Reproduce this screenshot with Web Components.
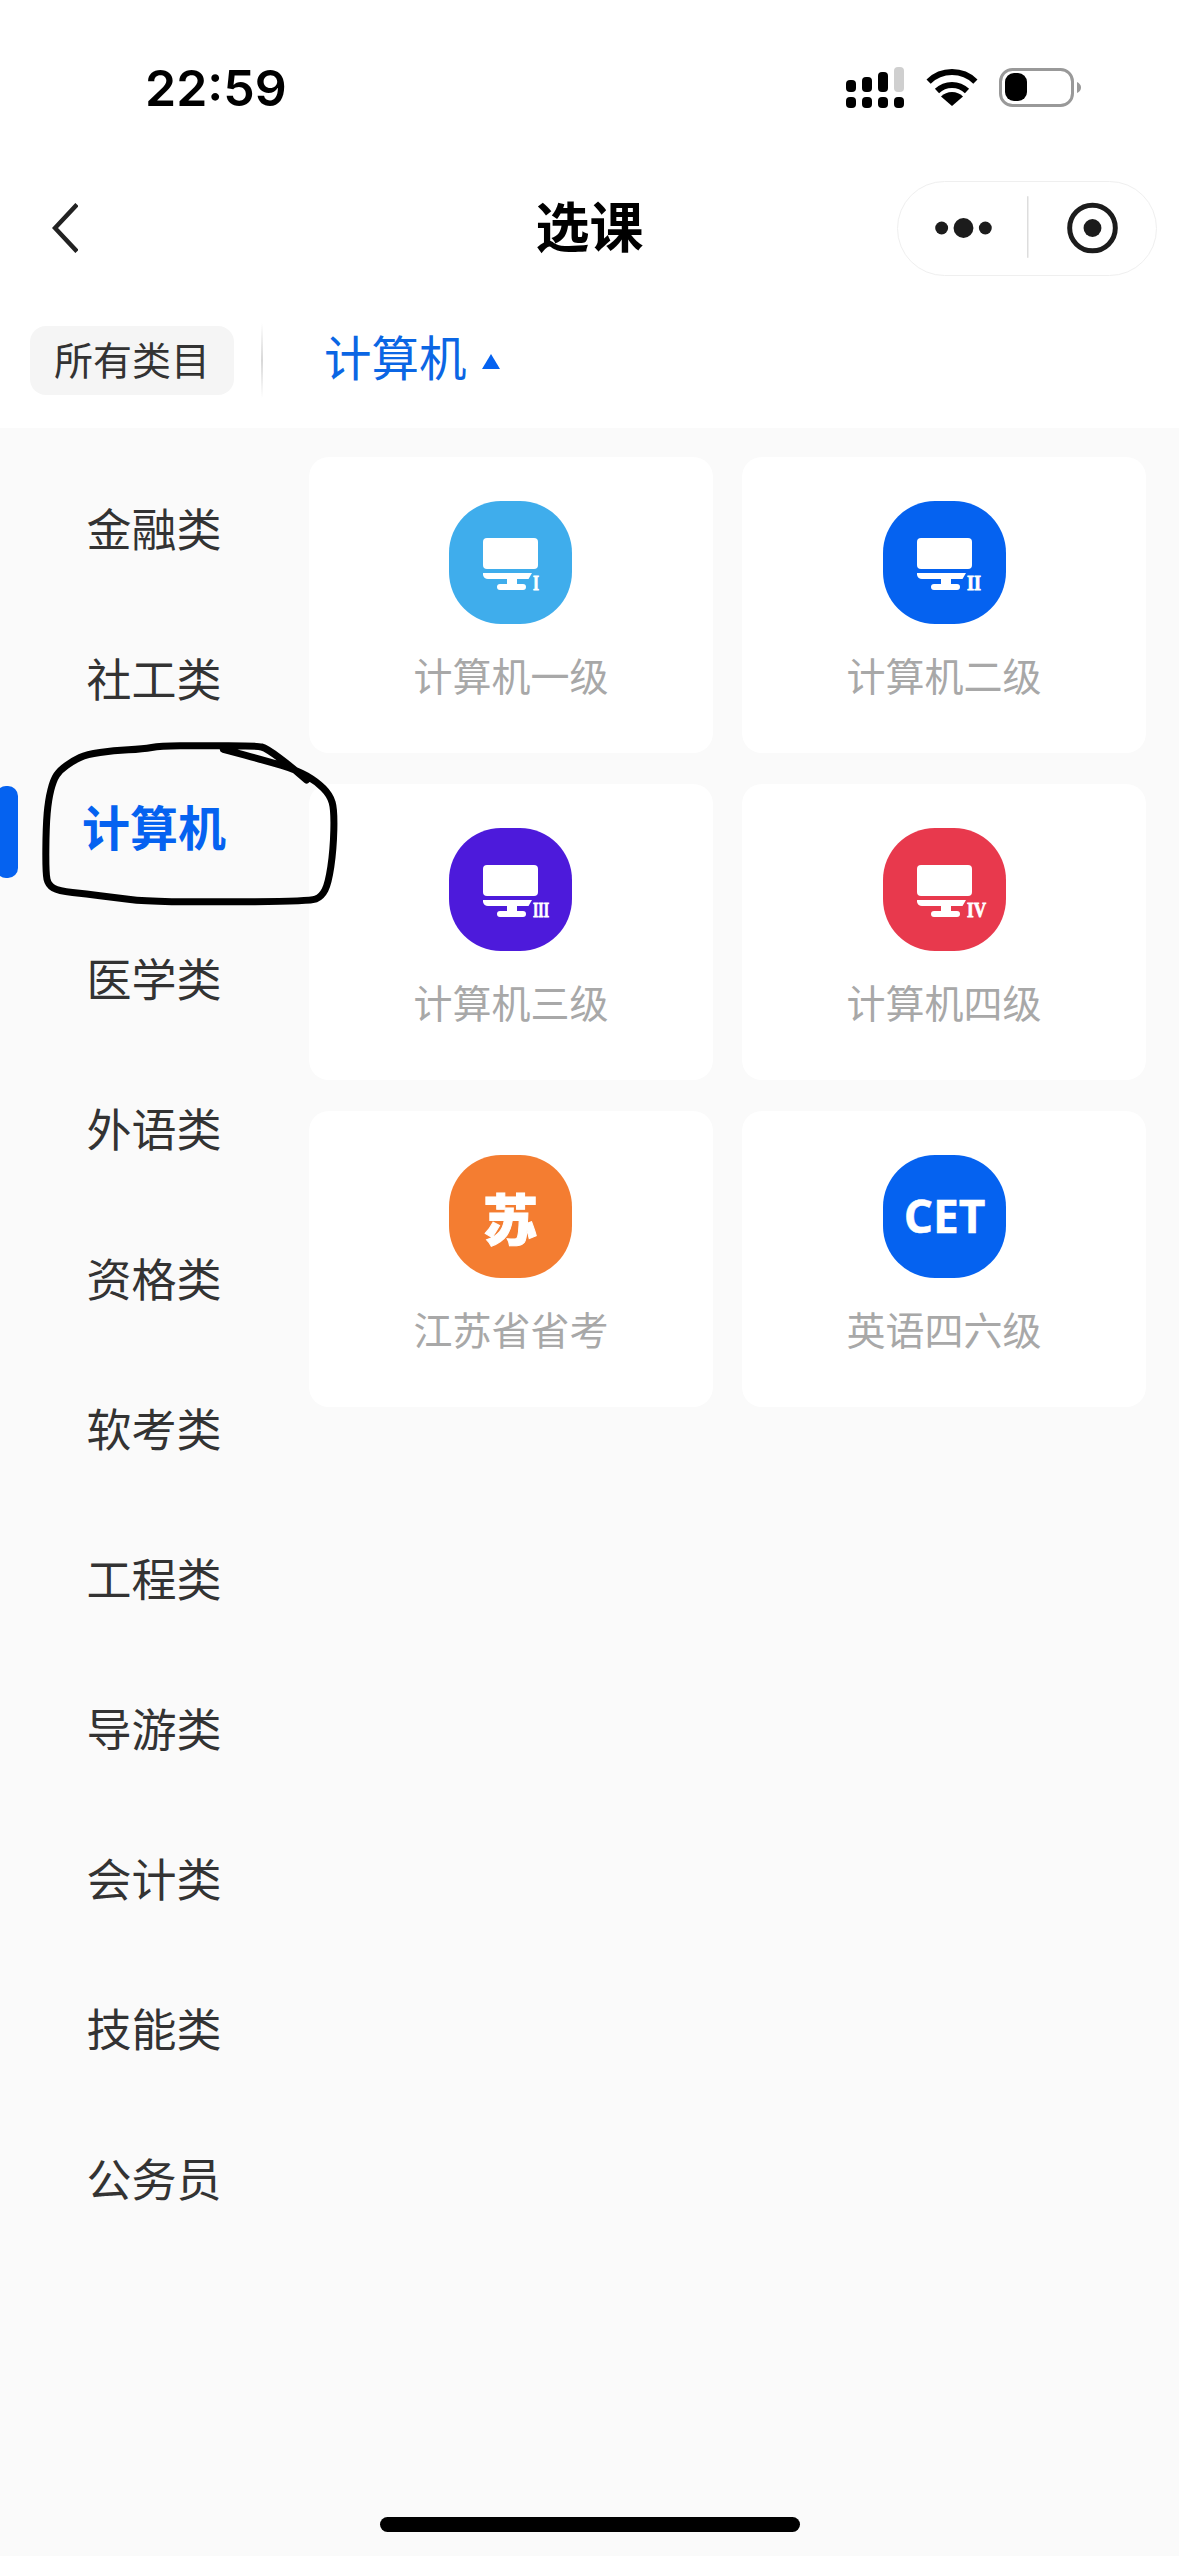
<!DOCTYPE html>
<html lang="zh">
<head>
<meta charset="utf-8">
<title>选课</title>
<style>
  html, body { margin: 0; padding: 0; background: #fff; }
  body { width: 1179px; height: 2556px; overflow: hidden; font-family: "Noto Sans CJK SC", "Noto Sans", sans-serif; }
  .app { position: relative; display: flex; flex-direction: column; height: 2556px; }
  .main { flex: 1; display: flex; background: #fafafa; }
</style>
</head>
<body>
<div class="app">
  <status-bar time="22:59"></status-bar>
  <nav-bar title="选课"></nav-bar>
  <tab-strip all="所有类目" current="计算机"></tab-strip>
  <div class="main">
    <category-list>
      <category-item>金融类</category-item>
      <category-item>社工类</category-item>
      <category-item active>计算机</category-item>
      <category-item>医学类</category-item>
      <category-item>外语类</category-item>
      <category-item>资格类</category-item>
      <category-item>软考类</category-item>
      <category-item>工程类</category-item>
      <category-item>导游类</category-item>
      <category-item>会计类</category-item>
      <category-item>技能类</category-item>
      <category-item>公务员</category-item>
    </category-list>
    <course-grid>
      <course-card color="#3fadec" numeral="I" nw="6">计算机一级</course-card>
      <course-card color="#0562f0" numeral="II" nw="14">计算机二级</course-card>
      <course-card color="#4d1adb" numeral="III" nw="16">计算机三级</course-card>
      <course-card color="#e8394d" numeral="IV" nw="19">计算机四级</course-card>
      <course-card color="#f47d31" mark="苏">江苏省省考</course-card>
      <course-card color="#0562f0" mark="CET">英语四六级</course-card>
    </course-grid>
  </div>
  <pen-circle></pen-circle>
  <home-bar></home-bar>
</div>

<script>
class StatusBar extends HTMLElement {
  constructor() {
    super();
    this.attachShadow({mode: 'open'});
    this.shadowRoot.innerHTML = `
      <style>
        :host { display: flex; justify-content: space-between; height: 164px; box-sizing: border-box; padding: 48px 98px 0 145px; }
        .time { height: 80px; font: 600 50px/80px Inter, "Liberation Sans", sans-serif; color: #000; }
        .icons { display: flex; align-items: center; height: 80px; }
        svg { display: block; }
      </style>
      <span class="time">${this.getAttribute('time')}</span>
      <div class="icons">
        <svg width="235" height="44" viewBox="846 66 235 44">
          <g fill="#000">
            <rect x="846" y="80" width="10" height="12" rx="4"/>
            <rect x="862" y="77" width="10" height="15" rx="4"/>
            <rect x="878" y="72" width="10" height="20" rx="4"/>
            <rect x="894" y="67" width="10" height="25" rx="4" fill="#cfcfcf"/>
            <rect x="846" y="97" width="10" height="11" rx="4"/>
            <rect x="862" y="97" width="10" height="11" rx="4"/>
            <rect x="878" y="97" width="10" height="11" rx="4"/>
            <rect x="894" y="97" width="10" height="11" rx="4"/>
          </g>
          <g transform="translate(927 69)">
            <path d="M1.6 12.6 A33.5 33.5 0 0 1 48.4 12.6" fill="none" stroke="#000" stroke-width="6"/>
            <path d="M10 22 A21.5 21.5 0 0 1 40 22" fill="none" stroke="#000" stroke-width="6"/>
            <path d="M25 37 L14 27.5 A15.5 15.5 0 0 1 36 27.5 Z" fill="#000"/>
          </g>
          <rect x="1000.5" y="69.5" width="72" height="36" rx="12" fill="none" stroke="#999" stroke-width="3"/>
          <rect x="1005" y="73" width="22" height="28" rx="9" fill="#000"/>
          <path d="M1077 82 Q1081 84 1081 87.500 Q1081 91 1077 93 Z" fill="#999"/>
        </svg>
      </div>`;
  }
}
customElements.define('status-bar', StatusBar);

class NavBar extends HTMLElement {
  constructor() {
    super();
    this.attachShadow({mode: 'open'});
    this.shadowRoot.innerHTML = `
      <style>
        :host { display: grid; grid-template-columns: 1fr auto 1fr; align-items: center; height: 128px; padding: 0 22px; }
        .title { font-size: 54px; font-weight: 700; color: #000; line-height: 122px; height: 128px; }
        .back { display: block; margin-left: 30px; }
        .capsule { justify-self: end; display: flex; align-items: center; width: 260px; height: 95px; box-sizing: border-box; border: 1.5px solid #efefef; border-radius: 48px; background: #fff; }
        .capsule svg { display: block; }
      </style>
      <svg class="back" width="26" height="50" viewBox="0 0 26 50">
        <path d="M25 1.500 L3 25 L25 48.500" fill="none" stroke="#222" stroke-width="4.500"/>
      </svg>
      <span class="title">${this.getAttribute('title')}</span>
      <div class="capsule">
        <svg width="260" height="95" viewBox="0 0 260 95">
          <circle cx="44" cy="47" r="6.500" fill="#1c1c1c"/>
          <circle cx="66" cy="47" r="10" fill="#1c1c1c"/>
          <circle cx="88" cy="47" r="6.500" fill="#1c1c1c"/>
          <rect x="130" y="15" width="1.500" height="62" fill="#ddd"/>
          <circle cx="196" cy="47" r="23" fill="none" stroke="#1c1c1c" stroke-width="5"/>
          <circle cx="196" cy="47" r="9" fill="#1c1c1c"/>
        </svg>
      </div>`;
  }
}
customElements.define('nav-bar', NavBar);

class TabStrip extends HTMLElement {
  constructor() {
    super();
    this.attachShadow({mode: 'open'});
    this.shadowRoot.innerHTML = `
      <style>
        :host { display: flex; align-items: center; height: 136px; padding-left: 30px; }
        .chip { width: 204px; height: 69px; line-height: 64px; text-align: center; background: #f5f5f5; border-radius: 16px; font-size: 39px; color: #333; white-space: nowrap; }
        .line { width: 2px; height: 75px; margin: 0 61px 0 27px; background: linear-gradient(#fff, #d8d8d8 50%, #fff); }
        .current { font-size: 47.500px; line-height: 60px; padding-bottom: 9px; color: #0b66e4; white-space: nowrap; }
        .tri { display: block; margin: 2px 0 0 15px; }
      </style>
      <span class="chip">${this.getAttribute('all')}</span>
      <span class="line"></span>
      <span class="current">${this.getAttribute('current')}</span>
      <svg class="tri" width="18" height="15" viewBox="0 0 18 15"><path d="M9 0 L18 15 H0 Z" fill="#0562f0"/></svg>`;
  }
}
customElements.define('tab-strip', TabStrip);

class CategoryList extends HTMLElement {
  constructor() {
    super();
    this.attachShadow({mode: 'open'});
    this.shadowRoot.innerHTML = `
      <style>
        :host { display: flex; flex-direction: column; width: 309px; flex: none; box-sizing: border-box; padding-top: 24px; }
      </style>
      <slot></slot>`;
  }
}
customElements.define('category-list', CategoryList);

class CategoryItem extends HTMLElement {
  constructor() {
    super();
    this.attachShadow({mode: 'open'});
    this.shadowRoot.innerHTML = `
      <style>
        :host { position: relative; display: flex; align-items: center; height: 150px; font-size: 45px; color: #333; }
        :host([active]) { font-size: 48px; font-weight: 700; color: #0562f0; }
        :host([active]) .text { padding-bottom: 4px; }
        :host([active])::before { content: ""; position: absolute; left: -4px; top: 34px; width: 22px; height: 92px; border-radius: 10px; background: #0562f0; }
        .text { width: 264px; margin-left: 22px; text-align: center; white-space: nowrap; }
      </style>
      <span class="text"><slot></slot></span>`;
  }
}
customElements.define('category-item', CategoryItem);

class CourseGrid extends HTMLElement {
  constructor() {
    super();
    this.attachShadow({mode: 'open'});
    this.shadowRoot.innerHTML = `
      <style>
        :host { display: grid; grid-template-columns: 404px 404px; column-gap: 29px; row-gap: 31px; align-content: start; padding-top: 29px; }
      </style>
      <slot></slot>`;
  }
}
customElements.define('course-grid', CourseGrid);

class CourseCard extends HTMLElement {
  constructor() {
    super();
    this.attachShadow({mode: 'open'});
    const color = this.getAttribute('color');
    const numeral = this.getAttribute('numeral');
    const mark = this.getAttribute('mark');
    let inner;
    if (numeral) {
      const nw = this.getAttribute('nw');
      inner = `
        <svg width="123" height="123" viewBox="0 0 123 123">
          <rect x="34" y="37" width="55" height="31" rx="4" fill="#fff"/>
          <path d="M34 72 H83 L79.500 78 H68 V83 H74 Q77 83 77 86 Q77 89 74 89 H51 Q48 89 48 86 Q48 83 51 83 H58 V78 H39 Q35 78 34 74 Z" fill="#fff"/>
          <text x="84" y="89" font-family="Liberation Serif, serif" font-weight="700" font-size="21" fill="#fff" stroke="#fff" stroke-width="0.8"
                textLength="${nw}" lengthAdjust="spacingAndGlyphs">${numeral}</text>
        </svg>`;
    } else {
      inner = `<span class="mark ${mark === 'CET' ? 'latin' : ''}">${mark}</span>`;
    }
    this.shadowRoot.innerHTML = `
      <style>
        :host { display: flex; flex-direction: column; align-items: center; height: 296px; box-sizing: border-box; padding-top: 44px; background: #fff; border-radius: 20px; }
        :host(:nth-child(odd)) .icon { margin-right: 1px; }
        :host(:nth-child(even)) .icon { margin-left: 1px; }
        .icon { display: flex; align-items: center; justify-content: center; width: 123px; height: 123px; border-radius: 52px; background: ${color}; }
        .icon svg { display: block; }
        .mark { font-size: 55px; font-weight: 900; line-height: 1; color: #fff; -webkit-text-stroke: 1px #fff; }
        .latin { font-family: "Open Sans", sans-serif; font-size: 46px; font-weight: 700; padding-bottom: 3px; -webkit-text-stroke: 0.5px #fff; }
        .label { margin-top: 20px; font-size: 39px; line-height: 60px; color: #a8a8a8; white-space: nowrap; }
      </style>
      <div class="icon">${inner}</div>
      <div class="label"><slot></slot></div>`;
  }
}
customElements.define('course-card', CourseCard);

// hand drawn ring around the active category, traced from the screenshot
class PenCircle extends HTMLElement {
  constructor() {
    super();
    this.attachShadow({mode: 'open'});
    const pts = [[920,240],[880,205],[800,145],[770,137],[600,137],[480,138],[430,147],[340,152],[260,163],[220,182],[180,210],[160,240],[145,300],[138,380],[137,520],[145,555],[175,573],[260,582],[340,592],[430,604],[600,606],[930,604],[965,590],[985,550],[1000,450],[1003,330],[990,285],[950,245],[890,210],[800,183],[670,148]]
      .map(p => [p[0] / 3, p[1] / 3]);
    let d = `M${pts[0][0]} ${pts[0][1]}`;
    for (let i = 1; i < pts.length - 1; i++) {
      const mx = (pts[i][0] + pts[i + 1][0]) / 2;
      const my = (pts[i][1] + pts[i + 1][1]) / 2;
      d += ` Q${pts[i][0]} ${pts[i][1]} ${mx} ${my}`;
    }
    d += ` L${pts[pts.length - 1][0]} ${pts[pts.length - 1][1]}`;
    this.shadowRoot.innerHTML = `
      <style>
        :host { position: absolute; left: 0; top: 700px; width: 360px; height: 240px; pointer-events: none; }
        svg { display: block; }
      </style>
      <svg width="360" height="240" viewBox="0 0 360 240">
        <path d="${d}" fill="none" stroke="#000" stroke-width="7" stroke-linecap="round" stroke-linejoin="round"/>
      </svg>`;
  }
}
customElements.define('pen-circle', PenCircle);

class HomeBar extends HTMLElement {
  constructor() {
    super();
    this.attachShadow({mode: 'open'});
    this.shadowRoot.innerHTML = `
      <style>
        :host { position: absolute; left: 380px; top: 2517px; width: 420px; height: 15px; border-radius: 8px; background: #000; }
      </style>`;
  }
}
customElements.define('home-bar', HomeBar);
</script>
</body>
</html>
